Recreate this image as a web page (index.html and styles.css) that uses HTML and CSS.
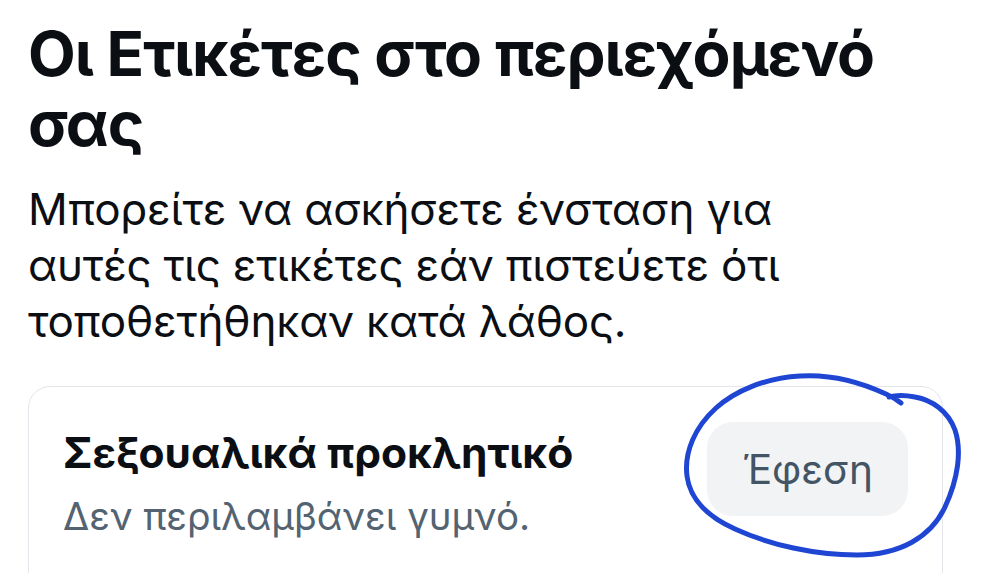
FILE: index.html
```html
<!DOCTYPE html>
<html lang="el">
<head>
    <meta charset="UTF-8">
    <meta name="viewport" content="width=device-width, initial-scale=1.0">
    <title>Οι Ετικέτες στο περιεχόμενό σας</title>
    <link rel="stylesheet" href="styles.css">
</head>
<body>

    <h1 class="page-title">Οι Ετικέτες στο περιεχόμενό σας</h1>
    <p class="page-intro">Μπορείτε να ασκήσετε ένσταση για αυτές τις ετικέτες εάν πιστεύετε ότι τοποθετήθηκαν κατά λάθος.</p>

    <!-- κάρτα ετικέτας -->
    <div class="label-card">
        <div class="label-info">
            <h2 class="label-name">Σεξουαλικά προκλητικό</h2>
            <p class="label-desc">Δεν περιλαμβάνει γυμνό.</p>
        </div>
        <button class="appeal-btn">Έφεση</button>

        <!-- κύκλος με το χέρι γύρω από το κουμπί -->
        <svg class="scribble" viewBox="678 368 290 192" width="290" height="192">
            <path d="M 901 403 C 896 399 893 397 886 394 C 858 381 830 374 800 376 C 765 378 735 391 716 408 C 695 427 684 452 687 476 C 690 499 706 516 735 529 C 770 545 815 555 857 555 C 900 555 931 537 945 507 C 958 479 962 451 955 430 C 948 411 932 400 915 397 C 905 395 896 395 889 397"
                  fill="none" stroke="#1f46d3" stroke-width="5" stroke-linecap="round" stroke-linejoin="round"/>
        </svg>
    </div>

</body>
</html>
```

FILE: styles.css
```css
body {
    font-family: 'Inter', 'Noto Sans', sans-serif;
    background-color: #ffffff;
    color: #0b0f14;
    margin: 0;
    padding: 19px 57px 0 28px;
    overflow: hidden;
}
.page-title {
    font-size: 62px;
    line-height: 70px;
    font-weight: 700;
    letter-spacing: -1px;
    margin: 0;
}
.page-intro {
    font-size: 44px;
    line-height: 56px;
    font-weight: 400;
    letter-spacing: -0.2px;
    margin: 22px 0 0 0;
    max-width: 790px;
}
.label-card {
    position: relative;
    margin-top: 37px;
    border: 1px solid #e3e6ea;
    border-radius: 22px;
    padding: 35px 34px 80px 34px;
    display: flex;
    justify-content: space-between;
    align-items: flex-start;
}
.label-info {
    margin-top: 7px;
}
.label-name {
    font-size: 42.5px;
    line-height: 48px;
    font-weight: 700;
    margin: 0;
}
.label-desc {
    font-size: 38.5px;
    line-height: 48px;
    color: #536372;
    margin: 15px 0 0 0;
}
.appeal-btn {
    width: 201px;
    height: 94px;
    border: none;
    border-radius: 26px;
    background-color: #f1f3f5;
    color: #435464;
    font-family: 'Inter', 'Noto Sans', sans-serif;
    font-size: 40.5px;
    cursor: pointer;
}
.scribble {
    position: absolute;
    left: 649px;
    top: -19px;
    pointer-events: none;
}
```
